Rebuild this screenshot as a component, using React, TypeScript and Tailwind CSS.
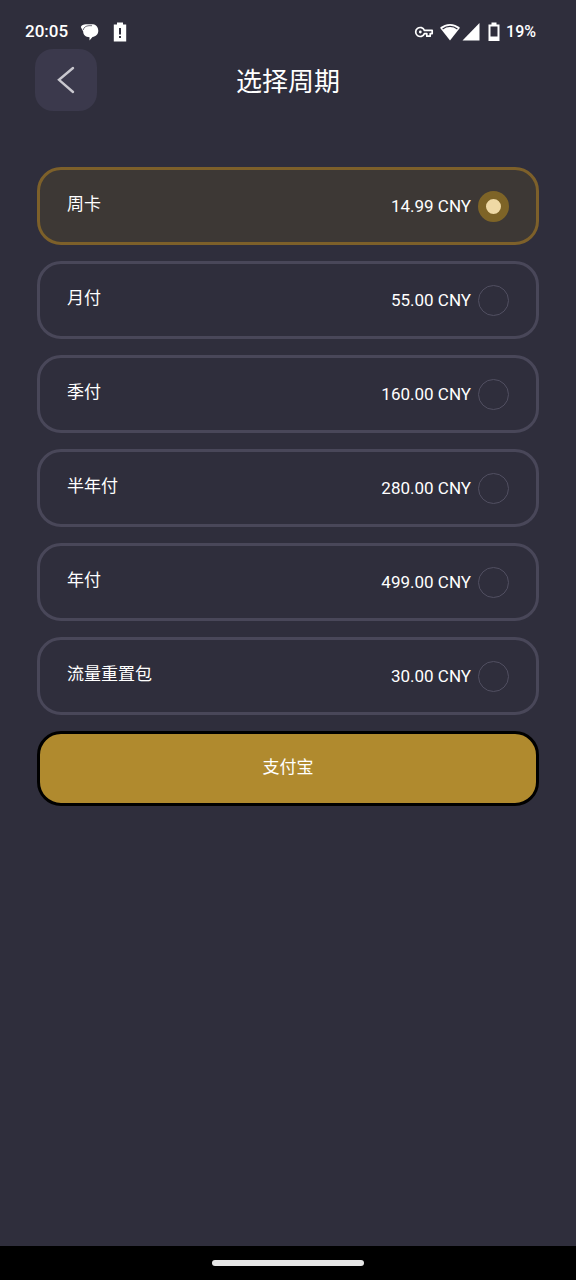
import { useState } from 'react'

type Plan = { id: string; name: string; price: string }

const PLANS: Plan[] = [
  { id: 'week', name: '周卡', price: '14.99 CNY' },
  { id: 'month', name: '月付', price: '55.00 CNY' },
  { id: 'quarter', name: '季付', price: '160.00 CNY' },
  { id: 'half', name: '半年付', price: '280.00 CNY' },
  { id: 'year', name: '年付', price: '499.00 CNY' },
  { id: 'reset', name: '流量重置包', price: '30.00 CNY' },
]

function StatusBar() {
  return (
    <div className="flex h-[49px] items-center justify-between pt-[15px] pr-10 pl-[25px] font-medium">
      <div className="flex items-center">
        <span className="text-[17px]">20:05</span>
        <svg className="ml-3 h-5 w-5" viewBox="0 0 20 20" fill="none">
          <path d="M6 2.200H13C16.500 2.800 18.300 5.500 18.300 8.800C18.300 12.300 15.800 14.600 12.500 15L9.500 18.600V15.200C5.500 15.200 3.200 12.600 3.200 9.500L0.800 5C1.500 3 3.500 2.200 6 2.200Z" fill="currentColor" />
          <path d="M3.200 8C3.900 5 6 3.900 9 3.700H12" stroke="#2f2e3c" strokeWidth="0.7" />
        </svg>
        <svg className="ml-3 h-5 w-4" viewBox="0 0 16 20">
          <path d="M5 0.500H11V2.500H14.200V19.500H1.800V2.500H5Z" fill="currentColor" />
          <path d="M7 6H9V12.500H7ZM7 14H9V16H7Z" fill="#2f2e3c" />
        </svg>
      </div>
      <div className="flex items-center">
        <svg className="h-5 w-5" viewBox="0 0 20 20" fill="none" stroke="currentColor" strokeWidth="1.700">
          <path d="M10.400 8.400A4.500 4.500 0 1 0 10.400 11.600H12.800V14.200H16.200V11.600H18.200V8.400Z" strokeLinejoin="round" />
          <circle cx="6.300" cy="10" r="1.400" fill="currentColor" stroke="none" />
        </svg>
        <svg className="ml-1.5 h-5 w-5" viewBox="0 0 20 20">
          <path d="M10 18.500L0 5.800C5.500 0.600 14.500 0.600 20 5.800Z" fill="currentColor" />
          <path d="M2.600 7C7 3.500 13 3.500 17.400 7" fill="none" stroke="#2f2e3c" strokeWidth="1.200" />
        </svg>
        <svg className="ml-0.5 h-5 w-[18px]" viewBox="0 0 18 20">
          <path d="M0.500 18.500L17.500 1V18.500Z" fill="currentColor" />
        </svg>
        <svg className="ml-1.5 h-5 w-4" viewBox="0 0 16 20">
          <path d="M5.500 0.500H10.500V2.500H13.500V19H2.500V2.500H5.500ZM4.500 4.500V14.500H11.500V4.500Z" fill="currentColor" fillRule="evenodd" />
        </svg>
        <span className="ml-1 text-base">19%</span>
      </div>
    </div>
  )
}

function PlanRow({ plan, selected, onSelect }: { plan: Plan; selected: boolean; onSelect: () => void }) {
  return (
    <label
      className={`flex h-[78px] cursor-pointer items-center justify-between rounded-3xl border-3 px-[27px] text-[17px] ${
        selected ? 'border-[#7d602a] bg-[#3d3835]' : 'border-[#494759]'
      }`}
    >
      <span className="pb-0.5">{plan.name}</span>
      <span className="flex items-center gap-[7px]">
        <span className="pt-0.5">{plan.price}</span>
        <input
          type="radio"
          name="plan"
          value={plan.id}
          checked={selected}
          onChange={onSelect}
          className="size-[31px] appearance-none rounded-full border border-[#514f61] checked:border-8 checked:border-[#7e6427] checked:bg-[#efd9a5]"
        />
      </span>
    </label>
  )
}

export default function App() {
  const [selected, setSelected] = useState('week')

  return (
    <div className="flex min-h-screen flex-col bg-[#2f2e3c] font-[Roboto,'Noto_Sans_CJK_SC',sans-serif] text-white">
      <StatusBar />

      {/* Header */}
      <header className="grid grid-cols-[62px_1fr_62px] items-center px-[35px]">
        <button
          type="button"
          aria-label="返回"
          className="flex h-[62px] items-center justify-center rounded-[18px] bg-[#3b394c]"
        >
          <svg className="h-8 w-8" viewBox="0 0 32 32" fill="none" stroke="#c9c8cf" strokeWidth="2.400" strokeLinecap="round">
            <path d="M23 4L9 15.800L23 28" />
          </svg>
        </button>
        <h1 className="pt-1 text-center text-[26px]">选择周期</h1>
      </header>

      {/* Plans */}
      <main className="mt-14 flex flex-1 flex-col gap-4 px-[37px]">
        {PLANS.map((plan) => (
          <PlanRow
            key={plan.id}
            plan={plan}
            selected={plan.id === selected}
            onSelect={() => setSelected(plan.id)}
          />
        ))}
        <button type="button" className="h-[75px] rounded-3xl border-3 border-black bg-[#b08a2e] pb-0.5 text-[17px]">
          支付宝
        </button>
      </main>

      {/* Gesture bar */}
      <div className="flex h-[34px] items-center justify-center bg-black">
        <div className="h-1.5 w-[152px] rounded-full bg-[#e6e6e6]" />
      </div>
    </div>
  )
}
